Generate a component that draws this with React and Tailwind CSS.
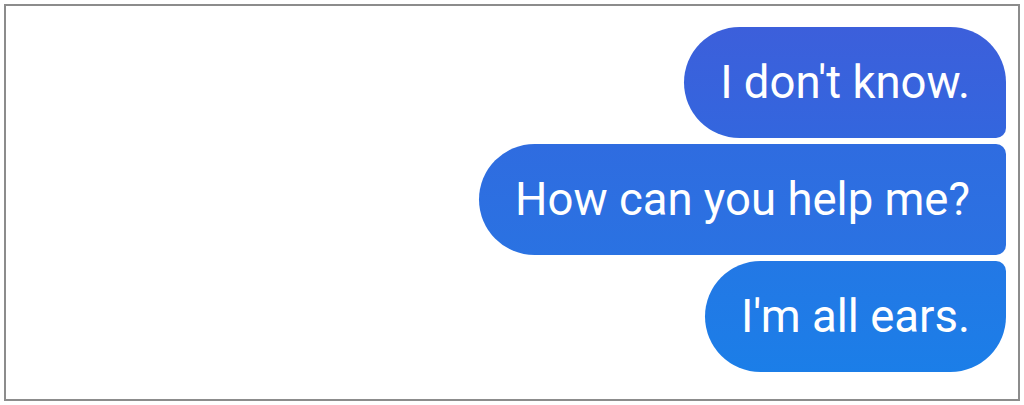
const messages = [
  {
    text: "I don't know.",
    shape: "rounded-tl-[56px] rounded-tr-[56px] rounded-br-[10px] rounded-bl-[56px]",
    color: "bg-gradient-to-b from-[#3c5fdb] to-[#3366de]",
  },
  {
    text: "How can you help me?",
    shape: "rounded-tl-[56px] rounded-tr-[10px] rounded-br-[10px] rounded-bl-[56px]",
    color: "bg-gradient-to-b from-[#2f6ce0] to-[#2a72e2]",
  },
  {
    text: "I'm all ears.",
    shape: "rounded-tl-[56px] rounded-tr-[10px] rounded-br-[56px] rounded-bl-[56px]",
    color: "bg-gradient-to-b from-[#2378e5] to-[#1b7ee8]",
  },
];

export default function App() {
  return (
    <div className="w-[1024px] h-[405px] bg-white p-[4px]">
      <div className="h-[397px] border-2 border-[#8c8c8c] flex flex-col items-end gap-[6px] pt-[21px] pr-[12px]">
        {/* BUBBLES */}
        {messages.map((m) => (
          <div
            key={m.text}
            className={`h-[111px] flex items-center px-[36px] text-white text-[45.5px] leading-none font-['Roboto',sans-serif] ${m.shape} ${m.color}`}
          >
            {m.text}
          </div>
        ))}
      </div>
    </div>
  );
}
